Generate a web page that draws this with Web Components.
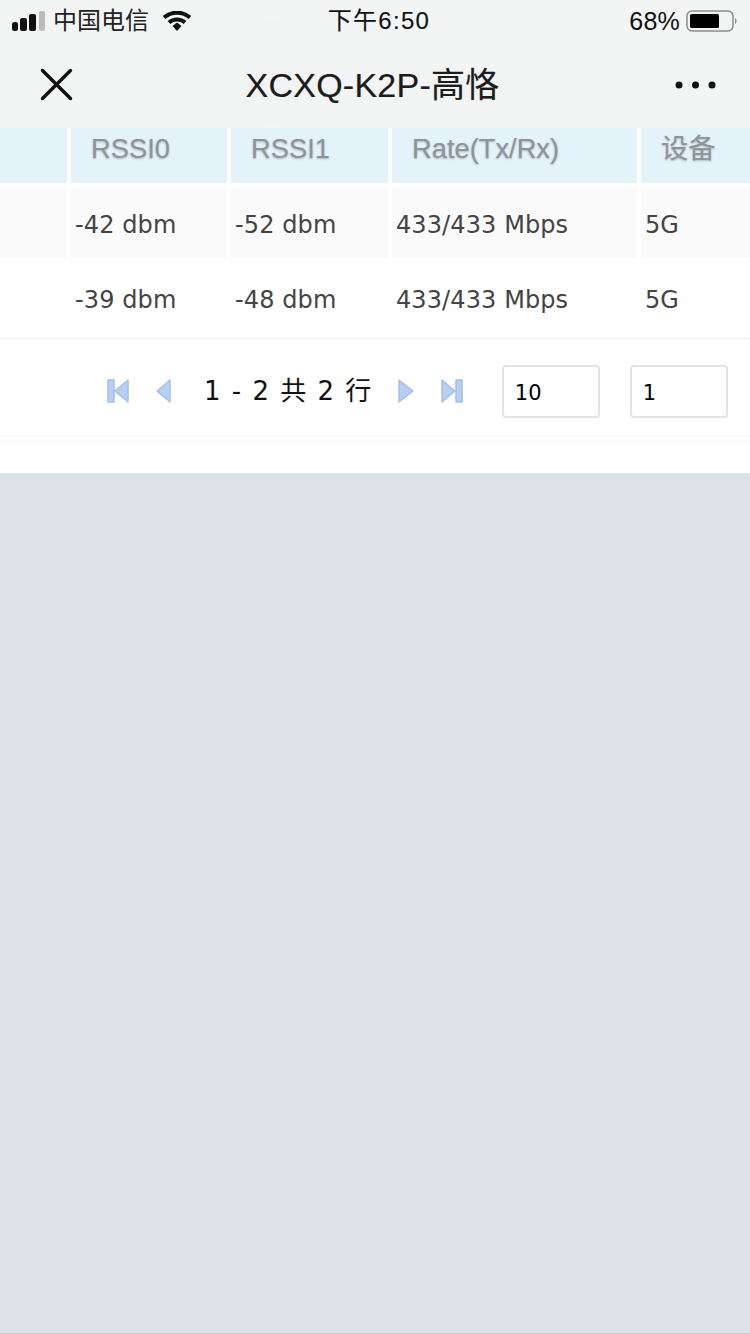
<!DOCTYPE html>
<html lang="zh">
<head>
<meta charset="utf-8">
<title>XCXQ-K2P-高恪</title>
<style>
    html, body { margin: 0; padding: 0; background: #dee1e6; }
    body { width: 750px; height: 1334px; overflow: hidden; display: flex; flex-direction: column; box-sizing: border-box; border-bottom: 1px solid #c8cacd; }
</style>
</head>
<body>
<status-bar carrier="中国电信" time="下午6:50" battery="68%"></status-bar>
<nav-bar>XCXQ-K2P-高恪</nav-bar>
<client-table>
    <table-row kind="head"><span></span><span>RSSI0</span><span>RSSI1</span><span>Rate(Tx/Rx)</span><span>设备</span></table-row>
    <table-row kind="odd"><span></span><span>-42 dbm</span><span>-52 dbm</span><span>433/433 Mbps</span><span>5G</span></table-row>
    <table-row kind="even"><span></span><span>-39 dbm</span><span>-48 dbm</span><span>433/433 Mbps</span><span>5G</span></table-row>
</client-table>
<table-pager summary="1 - 2 共 2 行" size="10" page="1"></table-pager>

<script>
// верхняя строка телефона
class StatusBar extends HTMLElement {
    connectedCallback() {
        this.attachShadow({ mode: 'open' });
        this.shadowRoot.innerHTML = `
            <style>
                :host { display: grid; grid-template-columns: 1fr auto 1fr; align-items: center; height: 42px; background: #f3f4f4; color: #111; font: 24px/28px "Liberation Sans", "Noto Sans CJK SC", sans-serif; }
                .left, .right { display: flex; align-items: center; }
                .left { padding-left: 12px; }
                .right { justify-content: flex-end; padding-right: 12px; }
                .carrier { margin-left: 8px; color: #222; }
                .wifi { margin-left: 14px; }
                .time { letter-spacing: 1.3px; padding-left: 8px; -webkit-text-stroke: .15px #111; }
                .pct { margin-right: 6px; font-size: 25px; letter-spacing: .2px; }
                svg { display: block; }
            </style>
            <div class="left">
                <svg width="33" height="20" viewBox="0 0 33 20">
                    <rect x="0" y="11" width="6" height="9" rx="2.500" fill="#111"/>
                    <rect x="8" y="7" width="7" height="13" rx="2" fill="#111"/>
                    <rect x="17" y="3" width="7" height="17" rx="2" fill="#111"/>
                    <rect x="27" y="0" width="6" height="20" rx="2" fill="#bbb"/>
                </svg>
                <span class="carrier">${this.getAttribute('carrier')}</span>
                <svg class="wifi" width="28" height="20" viewBox="0 0 28 20">
                    <path d="M1 6.500C8.500 0 19.500 0 27 6.500" fill="none" stroke="#111" stroke-width="4"/>
                    <path d="M6 11.500C10.500 7.500 17.500 7.500 22 11.500" fill="none" stroke="#111" stroke-width="4"/>
                    <path d="M9.500 15L14 11.500L18.500 15L14 20Z" fill="#111"/>
                </svg>
            </div>
            <div class="time">${this.getAttribute('time')}</div>
            <div class="right">
                <span class="pct">${this.getAttribute('battery')}</span>
                <svg width="52" height="24" viewBox="0 0 52 24">
                    <rect x="1" y="2" width="46" height="20" rx="5" fill="none" stroke="#8c8c8c" stroke-width="1.500"/>
                    <rect x="4" y="5" width="29" height="14" rx="1.500" fill="#000"/>
                    <path d="M49 9C51 10 51 14 49 15Z" fill="#8c8c8c"/>
                </svg>
            </div>
        `;
    }
}

// шапка вебвью с заголовком
class NavBar extends HTMLElement {
    connectedCallback() {
        this.attachShadow({ mode: 'open' });
        this.shadowRoot.innerHTML = `
            <style>
                :host { position: relative; display: flex; align-items: center; justify-content: space-between; box-sizing: border-box; height: 86px; padding: 0 34px 1px 40px; background: #f3f4f4; color: #1c1c1c; font: 34px/40px "Liberation Sans", "Noto Sans CJK SC", sans-serif; }
                .title { flex: 1; text-align: center; padding-right: 3px; letter-spacing: .25px; -webkit-text-stroke: .2px #1c1c1c; }
                .ghost { position: absolute; left: 232px; top: -22px; width: 78px; height: 104px; border-radius: 50%; background: rgba(0, 0, 0, .005); pointer-events: none; }
                svg { display: block; }
            </style>
            <div class="ghost"></div>
            <svg width="33" height="33" viewBox="0 0 33 33">
                <path d="M2.500 2.500L30.500 30.500M30.500 2.500L2.500 30.500" stroke="#111" stroke-width="3.400" stroke-linecap="round"/>
            </svg>
            <div class="title"><slot></slot></div>
            <svg width="41" height="10" viewBox="0 0 41 10">
                <circle cx="4" cy="5" r="3.500" fill="#111"/>
                <circle cx="20.500" cy="5" r="3.500" fill="#111"/>
                <circle cx="37" cy="5" r="3.500" fill="#111"/>
            </svg>
        `;
    }
}

class ClientTable extends HTMLElement {
    connectedCallback() {
        this.attachShadow({ mode: 'open' });
        this.shadowRoot.innerHTML = `
            <style>
                :host { display: block; background: #fff; border-bottom: 1px solid #f0f0f0; }
            </style>
            <slot></slot>
        `;
    }
}

class TableRow extends HTMLElement {
    connectedCallback() {
        this.attachShadow({ mode: 'open' });
        this.shadowRoot.innerHTML = `
            <style>
                :host { display: grid; grid-template-columns: 67px 156px 157px 245px 1fr; column-gap: 4px; }
                :host([kind="head"]) { height: 55px; margin-bottom: 4px; }
                :host([kind="odd"]) { height: 71px; }
                :host([kind="even"]) { height: 80px; }
                ::slotted(span) { display: flex; align-items: center; box-sizing: border-box; }
                :host([kind="head"]) ::slotted(span) { padding: 0 0 14px 20px; background: #e4f2fa; color: #8e9397; font: 27.300px/32px "Liberation Sans", "Noto Sans CJK SC", sans-serif; text-shadow: 0 1px 2px rgba(90, 95, 100, .4); }
                :host([kind="odd"]) ::slotted(span) { padding: 4px 0 0 4px; background: #fafafa; color: #444; font: 24px/28px "DejaVu Sans", "Noto Sans CJK SC", sans-serif; letter-spacing: .1px; }
                :host([kind="even"]) ::slotted(span) { padding: 4px 0 0 4px; color: #444; font: 24px/28px "DejaVu Sans", "Noto Sans CJK SC", sans-serif; letter-spacing: .1px; }
            </style>
            <slot></slot>
        `;
    }
}

// стрелки листания
const PAGER_ICONS = {
    first: '<rect x="1" y="1" width="6" height="22"/><path d="M21 1V23L8 12Z"/>',
    prev: '<path d="M15 1V23L2 12Z"/>',
    next: '<path d="M1 1V23L15 12Z"/>',
    last: '<path d="M1 1V23L14 12Z"/><rect x="15" y="1" width="6" height="22"/>'
};

class TablePager extends HTMLElement {
    connectedCallback() {
        const icon = (name, w) => `<svg width="${w}" height="24" viewBox="0 0 ${w} 24">
            <g fill="#b8cff1" stroke="#a3c0ea" stroke-width="1.500" stroke-linejoin="round">${PAGER_ICONS[name]}</g></svg>`;
        this.attachShadow({ mode: 'open' });
        this.shadowRoot.innerHTML = `
            <style>
                :host { display: block; background: #fff; border-bottom: 1px solid #e6e8ea; }
                .bar { display: flex; align-items: center; height: 98px; padding: 8px 22px 0 107px; border-bottom: 2px solid #fafafa; box-sizing: border-box; }
                svg { display: block; flex: none; filter: blur(.7px); }
                .prev { margin-left: 26px; }
                .summary { margin: 0 25px 0 33px; color: #111; font: 26px/30px "DejaVu Sans", "Noto Sans CJK SC", sans-serif; letter-spacing: 1.500px; white-space: nowrap; }
                .next { margin-right: 27px; }
                .box { box-sizing: border-box; width: 98px; height: 53px; padding: 4px 0 0 11px; border: 2px solid #e1e5e9; border-radius: 4px; color: #000; font: 21px/26px "DejaVu Sans", sans-serif; display: flex; align-items: center; }
                .size { margin-left: 39px; }
                .page { margin-left: 30px; }
                .gap { height: 36px; background: linear-gradient(#fcfcfc, #fff 40%); }
            </style>
            <div class="bar">
                ${icon('first', 22)}
                <span class="prev">${icon('prev', 16)}</span>
                <span class="summary">${this.getAttribute('summary')}</span>
                <span class="next">${icon('next', 16)}</span>
                ${icon('last', 22)}
                <div class="box size">${this.getAttribute('size')}</div>
                <div class="box page">${this.getAttribute('page')}</div>
            </div>
            <div class="gap"></div>
        `;
    }
}

customElements.define('status-bar', StatusBar);
customElements.define('nav-bar', NavBar);
customElements.define('client-table', ClientTable);
customElements.define('table-row', TableRow);
customElements.define('table-pager', TablePager);
</script>
</body>
</html>
